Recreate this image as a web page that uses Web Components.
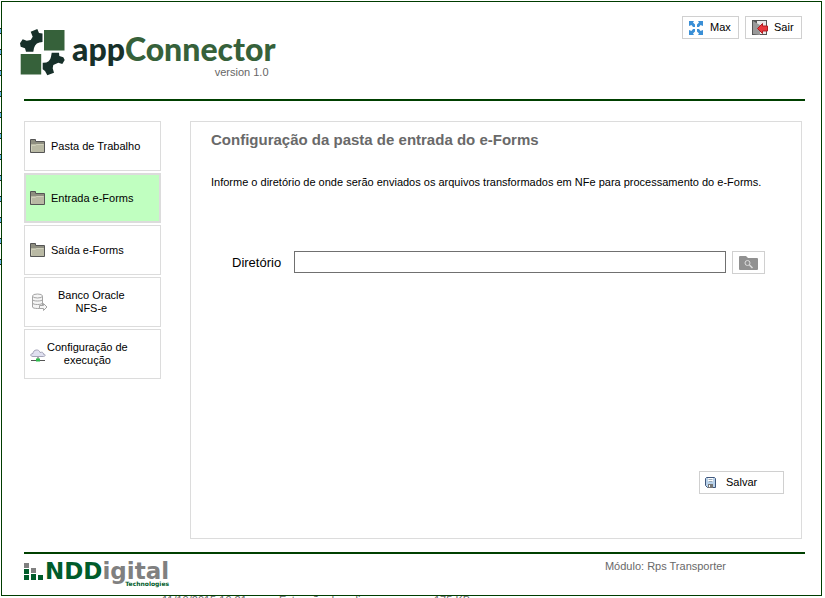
<!DOCTYPE html>
<html lang="pt-BR">
<head>
<meta charset="utf-8">
<meta name="viewport" content="width=device-width, initial-scale=1">
<title>appConnector</title>
<style>
    body {
        margin: 0;
        background: white;
        color: black;
        font-family: "Liberation Sans", Arial, sans-serif;
        font-size: 11px;
        line-height: 13px;
    }
</style>
</head>
<body>
<app-desktop>
    <app-window>
        <app-header slot="header" version="version 1.0">
            <tool-button icon="max">Max</tool-button>
            <tool-button icon="exit">Sair</tool-button>
        </app-header>
        <side-menu slot="menu">
            <menu-item icon="folder">Pasta de Trabalho</menu-item>
            <menu-item icon="folder" active>Entrada e-Forms</menu-item>
            <menu-item icon="folder">Saída e-Forms</menu-item>
            <menu-item icon="database" class="wide">Banco Oracle<br>NFS-e</menu-item>
            <menu-item icon="cloud" class="tight">Configuração de<br>execução</menu-item>
        </side-menu>
        <config-panel>
            <span slot="title">Configuração da pasta de entrada do e-Forms</span>
            <span slot="hint">Informe o diretório de onde serão enviados os arquivos transformados em NFe para processamento do e-Forms.</span>
            <directory-field label="Diretório"></directory-field>
            <tool-button slot="actions" icon="save" class="save">Salvar</tool-button>
        </config-panel>
        <app-footer slot="footer">Módulo: Rps Transporter</app-footer>
    </app-window>
</app-desktop>

<script>
const ICONS = {
    max: `<svg width="16" height="16" viewBox="0 0 16 16" fill="#3a8fd6">
            <path d="M1 1h5l-1 1.500L7 4.500V7H5L3.500 5 1 6zM15 1v5l-2.500-1L11 7H9V4.500l2-2L10 1zM1 15v-5l2.500 1L5 9h2v2.500l-2 2L6 15zM15 15h-5l1-1.500-2-2V9h2l1.500 2 2.500-1z"/>
          </svg>`,
    exit: `<svg width="17" height="17" viewBox="0 0 17 17">
            <path fill="#555" d="M1 1h15v15H1z"/>
            <path fill="#e8e8e8" d="M6 2h9v13H6z"/>
            <path fill="#999" d="M2 2l7 4v10l-7-1z"/>
            <path fill="#e8373c" stroke="#b01c20" d="M6.500 9.500l5-5V7h5v5h-5v2.500z"/>
          </svg>`,
    folder: `<svg width="16" height="16" viewBox="0 0 16 16">
            <path fill="#b9b9a4" stroke="#555" d="M.5 14.500V1.500h5v2h9v11z"/>
            <path fill="#8e8e80" d="M1 2h4v2h9v2H1z"/>
            <path fill="none" stroke="#d0d0bc" d="M1.500 13V7.500h4l1-1h7"/>
          </svg>`,
    database: `<svg width="18" height="18" viewBox="0 0 18 18" fill="#f6f6f6" stroke="#a4a4a4">
            <path d="M2.500 3v11c0 2 10 2 10 0V3"/>
            <ellipse cx="7.500" cy="3" rx="5" ry="2"/>
            <path fill="none" d="M2.500 6.500c0 2 10 2 10 0M2.500 10c0 2 10 2 10 0"/>
            <path d="M9.500 12.500h4v-2l3.500 3.500-3.500 3.500v-2h-4z"/>
          </svg>`,
    cloud: `<svg width="16" height="16" viewBox="0 0 16 16">
            <path fill="#e0e0f0" stroke="#a4a4b8" d="M3 8.500C0 8.500 0 5.500 3 5.500c0-4 6-5 7-1 3-1 4 1 3 1.500 3 0 2.500 2.500.5 2.500z"/>
            <path stroke="#555" d="M8 9v3M1 12.500h14"/>
            <path fill="#2dbd4e" d="M6 10.500h4v3H6z"/>
          </svg>`,
    save: `<svg width="11" height="11" viewBox="0 0 11 11">
            <path fill="#b9d2ea" stroke="#40577c" d="M1.500.500h8l1 1v9h-8l-2-2v-7z"/>
            <path fill="#fff" d="M3 1h5v4H3z"/>
            <path stroke="#9ab" d="M3.500 2.500h4M3.500 4.500h4"/>
            <path fill="#777" d="M3 7h5v4H3z"/>
            <path fill="#fff" d="M4 8h1v2H4z"/>
          </svg>`,
    browse: `<svg width="19" height="14" viewBox="0 0 19 14">
            <path fill="#919191" d="M1 0h6l2 2h9q1 0 1 1v10q0 1-1 1H1q-1 0-1-1V1q0-1 1-1z"/>
            <circle cx="8.500" cy="7" r="2.500" fill="none" stroke="#ddd"/>
            <path stroke="#ddd" stroke-width="1.500" d="M10.500 9l3 3"/>
          </svg>`
};

class AppDesktop extends HTMLElement {
    constructor() {
        super();
        this.attachShadow({mode: 'open'});
        this.shadowRoot.innerHTML = `
            <style>
                :host {
                    display: flex;
                    flex-direction: column;
                    height: 100vh;
                    box-sizing: border-box;
                    padding: 1px 3px 0 1px;
                    background: repeating-linear-gradient(#fff 0 6px, #222 6px 7px, #6bb8e8 7px 11px, #222 11px 12px, #fff 12px 21px) 0 22px / 1px 250px no-repeat;
                }
                .below {
                    height: 2px;
                    overflow: hidden;
                    display: grid;
                    grid-template-columns: 117px 155px 1fr;
                    padding-left: 161px;
                    line-height: 9px;
                    color: #666;
                }
            </style>
            <slot></slot>
            <div class="below"><span>11/10/2015 10:21</span><span>Extensão de aplica...</span><span>175 KB</span></div>
        `;
    }
}

class AppWindow extends HTMLElement {
    constructor() {
        super();
        this.attachShadow({mode: 'open'});
        this.shadowRoot.innerHTML = `
            <style>
                :host {
                    display: flex;
                    flex-direction: column;
                    flex: 1;
                    box-sizing: border-box;
                    border: 1px solid #003c00;
                    padding: 0 16px 0 22px;
                    background: white;
                }
                main {
                    display: grid;
                    grid-template-columns: 137px 1fr;
                    gap: 29px;
                    flex: 1;
                    padding: 20px 3px 13px 0;
                }
            </style>
            <slot name="header"></slot>
            <main>
                <slot name="menu"></slot>
                <slot></slot>
            </main>
            <slot name="footer"></slot>
        `;
    }
}

class AppHeader extends HTMLElement {
    constructor() {
        super();
        this.attachShadow({mode: 'open'});
        this.shadowRoot.innerHTML = `
            <style>
                :host {
                    display: flex;
                    justify-content: space-between;
                    align-items: flex-start;
                    height: 97px;
                    padding-right: 3px;
                    border-bottom: 2px solid #004000;
                }
                .brand {
                    display: flex;
                    gap: 6px;
                    margin-left: -4px;
                    padding-top: 26px;
                }
                .name {
                    font: 900 32px/42px Lato, sans-serif;
                    color: #17302a;
                }
                .name b {
                    font-weight: 900;
                    color: #36613a;
                }
                .version {
                    text-align: right;
                    padding-right: 7px;
                    margin-top: -4px;
                    color: #666;
                }
                nav {
                    display: flex;
                    gap: 6px;
                    padding-top: 14px;
                }
            </style>
            <div class="brand">
                <svg width="46" height="48" viewBox="0 0 46 48">
                    <path fill="#36613a" d="M24 2h20.500v20.500H24zM.7 26h20.500v20.500H.7z"/>
                    <path fill="#17302a" d="M10.700 3.700L17.300 1l1.700 4 3.500.5V14q-7 0-8.500 6l-.7 3.700H6l-1-3.400-4.300-1.600L0 15.300l2.700-4 4 1.400 4-.7 2-3.300zM31.700 24.700H39l.3 3.300 4 1.300 1.400 2.700-2.400 4-4-1.300-5 2.300-.6 3.300 1.300 4.400-6.700 2.600L25 43l-2.300-1.700v-6.600Q30 35 31 28.700z"/>
                </svg>
                <div>
                    <div class="name">app<b>Connector</b></div>
                    <div class="version"></div>
                </div>
            </div>
            <nav><slot></slot></nav>
        `;
    }

    connectedCallback() {
        this.shadowRoot.querySelector('.version').textContent = this.getAttribute('version');
    }
}

class ToolButton extends HTMLElement {
    constructor() {
        super();
        this.attachShadow({mode: 'open'});
        this.shadowRoot.innerHTML = `
            <style>
                :host {
                    display: block;
                }
                button {
                    display: flex;
                    align-items: center;
                    gap: 6px;
                    box-sizing: border-box;
                    width: 57px;
                    height: 23px;
                    padding: 0 5px;
                    border: 1px solid #d0d0d0;
                    background: white;
                    color: inherit;
                    font: inherit;
                    white-space: nowrap;
                }
                svg {
                    display: block;
                    flex: none;
                }
                :host(.save) button {
                    width: 85px;
                    gap: 10px;
                }
            </style>
            <button type="button"><span class="icon"></span><slot></slot></button>
        `;
    }

    connectedCallback() {
        this.shadowRoot.querySelector('.icon').innerHTML = ICONS[this.getAttribute('icon')];
    }
}

class SideMenu extends HTMLElement {
    constructor() {
        super();
        this.attachShadow({mode: 'open'});
        this.shadowRoot.innerHTML = `
            <style>
                :host {
                    display: block;
                }
                nav {
                    display: grid;
                    gap: 2px;
                }
            </style>
            <nav><slot></slot></nav>
        `;
    }
}

class MenuItem extends HTMLElement {
    constructor() {
        super();
        this.attachShadow({mode: 'open'});
        this.shadowRoot.innerHTML = `
            <style>
                :host {
                    display: block;
                }
                button {
                    display: flex;
                    align-items: center;
                    gap: 5px;
                    box-sizing: border-box;
                    width: 100%;
                    height: 50px;
                    padding: 0 5px;
                    border: 1px solid #dcdcdc;
                    background: white;
                    color: inherit;
                    font: inherit;
                    text-align: center;
                    white-space: nowrap;
                }
                svg {
                    display: block;
                }
                :host([active]) button {
                    border-width: 2px;
                    padding: 0 4px;
                    background: #c0ffc0;
                }
                :host(.wide) button {
                    gap: 10px;
                }
                :host(.tight) button {
                    gap: 1px;
                }
                :host(.tight) .icon {
                    padding-top: 4px;
                }
            </style>
            <button type="button"><span class="icon"></span><span><slot></slot></span></button>
        `;
    }

    connectedCallback() {
        this.shadowRoot.querySelector('.icon').innerHTML = ICONS[this.getAttribute('icon')];
    }
}

class ConfigPanel extends HTMLElement {
    constructor() {
        super();
        this.attachShadow({mode: 'open'});
        this.shadowRoot.innerHTML = `
            <style>
                :host {
                    display: flex;
                    flex-direction: column;
                    box-sizing: border-box;
                    border: 1px solid #dcdcdc;
                    padding: 8px 17px 44px 20px;
                }
                h1 {
                    margin: 0 0 26px;
                    font-size: 15px;
                    line-height: 20px;
                    color: #696969;
                }
                p {
                    margin: 0 0 62px;
                }
                .actions {
                    display: flex;
                    justify-content: flex-end;
                    margin-top: auto;
                }
            </style>
            <h1><slot name="title"></slot></h1>
            <p><slot name="hint"></slot></p>
            <slot></slot>
            <div class="actions"><slot name="actions"></slot></div>
        `;
    }
}

class DirectoryField extends HTMLElement {
    constructor() {
        super();
        this.attachShadow({mode: 'open'});
        this.shadowRoot.innerHTML = `
            <style>
                :host {
                    display: flex;
                    align-items: flex-start;
                    padding: 0 19px 0 21px;
                }
                label {
                    width: 62px;
                    font-size: 13px;
                    line-height: 23px;
                }
                input {
                    flex: 1;
                    min-width: 0;
                    box-sizing: border-box;
                    height: 22px;
                    padding: 0 4px;
                    border: 1px solid #707070;
                    background: white;
                    font: inherit;
                }
                button {
                    display: flex;
                    align-items: center;
                    justify-content: center;
                    box-sizing: border-box;
                    width: 33px;
                    height: 23px;
                    margin-left: 6px;
                    padding: 0;
                    border: 1px solid #d0d0d0;
                    background: white;
                }
            </style>
            <label for="path"></label>
            <input id="path" type="text">
            <button type="button" aria-label="Procurar">${ICONS.browse}</button>
        `;
    }

    connectedCallback() {
        this.shadowRoot.querySelector('label').textContent = this.getAttribute('label');
    }
}

class AppFooter extends HTMLElement {
    constructor() {
        super();
        this.attachShadow({mode: 'open'});
        this.shadowRoot.innerHTML = `
            <style>
                :host {
                    display: flex;
                    justify-content: space-between;
                    align-items: flex-start;
                    box-sizing: border-box;
                    height: 43px;
                    padding-right: 79px;
                    border-top: 2px solid #004000;
                    color: #696969;
                }
                .logo {
                    display: flex;
                    gap: 2px;
                    padding-top: 7px;
                }
                svg {
                    margin-top: 2px;
                }
                .name {
                    font: bold 23px/20px "DejaVu Sans", sans-serif;
                    color: #005c2b;
                }
                .name span {
                    color: #808080;
                }
                .sub {
                    text-align: right;
                    font: bold 6px/6px "DejaVu Sans", sans-serif;
                    color: #005c2b;
                }
                .module {
                    padding-top: 6px;
                }
            </style>
            <div class="logo">
                <svg width="19" height="18" viewBox="0 0 19 18">
                    <path fill="#808080" d="M0 0h5v5H0zM7 5h5v5H7z"/>
                    <path fill="#005c2b" d="M0 6h5v5H0zM0 12h5v5H0zM7 11h5v6H7zM14 12h5v5h-5z"/>
                </svg>
                <div>
                    <div class="name">NDD<span>igital</span></div>
                    <div class="sub">Technologies</div>
                </div>
            </div>
            <div class="module"><slot></slot></div>
        `;
    }
}

customElements.define('app-desktop', AppDesktop);
customElements.define('app-window', AppWindow);
customElements.define('app-header', AppHeader);
customElements.define('tool-button', ToolButton);
customElements.define('side-menu', SideMenu);
customElements.define('menu-item', MenuItem);
customElements.define('config-panel', ConfigPanel);
customElements.define('directory-field', DirectoryField);
customElements.define('app-footer', AppFooter);
</script>
</body>
</html>
